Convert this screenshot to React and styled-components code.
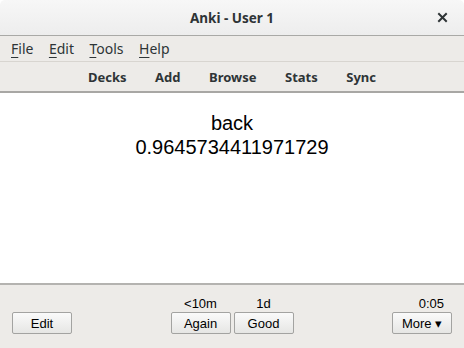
import React from "react";
import styled, { createGlobalStyle } from "styled-components";

const Global = createGlobalStyle`
  html, body {
    margin: 0;
    padding: 0;
    background: #ffffff;
  }
  * {
    box-sizing: border-box;
  }
`;

const Window = styled.div`
  width: 464px;
  height: 348px;
  display: flex;
  flex-direction: column;
  overflow: hidden;
`;

const TitleBar = styled.div`
  height: 36px;
  flex: none;
  display: grid;
  grid-template-columns: 40px 1fr 40px;
  align-items: center;
  background: linear-gradient(#f7f7f7, #ededed);
  border-bottom: 1px solid #a9a9a6;
  border-radius: 5px 5px 0 0;
  font-family: "Noto Sans", "Open Sans", sans-serif;
`;

const Title = styled.div`
  grid-column: 2;
  text-align: center;
  font-size: 13.5px;
  font-weight: 700;
  color: #2e3436;
`;

const Close = styled.div`
  display: flex;
  justify-content: center;
  color: #2e3436;
  padding-right: 4px;
`;

const MenuBar = styled.div`
  height: 26px;
  flex: none;
  display: flex;
  align-items: center;
  gap: 15.5px;
  padding-left: 11px;
  background: #edebe8;
  border-bottom: 1px solid #d8d5d0;
  font-family: "Noto Sans", "Open Sans", sans-serif;
  font-size: 14px;
  color: #2e3436;
`;

const MenuItem = styled.span`
  & u {
    text-decoration-thickness: 1px;
    text-underline-offset: 3px;
  }
`;

const ToolBar = styled.div`
  height: 31px;
  flex: none;
  display: flex;
  align-items: center;
  justify-content: center;
  gap: 28.5px;
  background: #edebe8;
  border-bottom: 2px solid #a8a7a4;
  font-family: "Noto Sans", "Open Sans", sans-serif;
  font-size: 13px;
  font-weight: 700;
  color: #2e3436;
`;

const Content = styled.div`
  flex: 1;
  background: #ffffff;
  padding-top: 18px;
  text-align: center;
  font-family: "Liberation Sans", Arial, sans-serif;
  font-size: 20px;
  line-height: 24px;
  color: #000000;
`;

const Bottom = styled.div`
  height: 65px;
  flex: none;
  background: #edebe8;
  border-top: 2px solid #b4b3b0;
  display: grid;
  grid-template-columns: 1fr auto 1fr;
  align-items: end;
  padding: 0 12px 14px;
  font-family: "Liberation Sans", Arial, sans-serif;
  font-size: 13px;
  color: #000000;
`;

const Col = styled.div`
  display: flex;
  gap: 3px;
  justify-content: ${(p) => p.$justify || "flex-start"};
`;

const Group = styled.div`
  display: flex;
  flex-direction: column;
  align-items: center;
  gap: 0;
`;

const Label = styled.div`
  line-height: 16px;
  text-align: ${(p) => p.$align || "center"};
  align-self: ${(p) => (p.$align === "right" ? "flex-end" : "center")};
  padding-right: ${(p) => (p.$align === "right" ? "8px" : "0")};
`;

const Button = styled.button`
  width: 60px;
  height: 22px;
  padding: 0;
  border: 1px solid #a3a3a1;
  border-radius: 2px;
  background: linear-gradient(#fafafa, #e6e6e4);
  font-family: "Liberation Sans", Arial, sans-serif;
  font-size: 13px;
  color: #000000;
`;

function App() {
  return (
    <Window>
      <Global />
      <TitleBar>
        <Title>Anki - User 1</Title>
        <Close>
          <svg width="11" height="11" viewBox="0 0 11 11">
            <path
              d="M2 2 L9 9 M9 2 L2 9"
              stroke="#2e3436"
              strokeWidth="2"
              strokeLinecap="square"
            />
          </svg>
        </Close>
      </TitleBar>
      <MenuBar>
        <MenuItem><u>F</u>ile</MenuItem>
        <MenuItem><u>E</u>dit</MenuItem>
        <MenuItem><u>T</u>ools</MenuItem>
        <MenuItem><u>H</u>elp</MenuItem>
      </MenuBar>
      <ToolBar>
        <span>Decks</span>
        <span>Add</span>
        <span>Browse</span>
        <span>Stats</span>
        <span>Sync</span>
      </ToolBar>
      <Content>
        <div>back</div>
        <div>0.9645734411971729</div>
      </Content>
      <Bottom>
        <Col>
          <Button>Edit</Button>
        </Col>
        <Col>
          <Group>
            <Label>&lt;10m</Label>
            <Button>Again</Button>
          </Group>
          <Group>
            <Label>1d</Label>
            <Button>Good</Button>
          </Group>
        </Col>
        <Col $justify="flex-end">
          <Group>
            <Label $align="right">0:05</Label>
            <Button>More ▾</Button>
          </Group>
        </Col>
      </Bottom>
    </Window>
  );
}

export default App;
